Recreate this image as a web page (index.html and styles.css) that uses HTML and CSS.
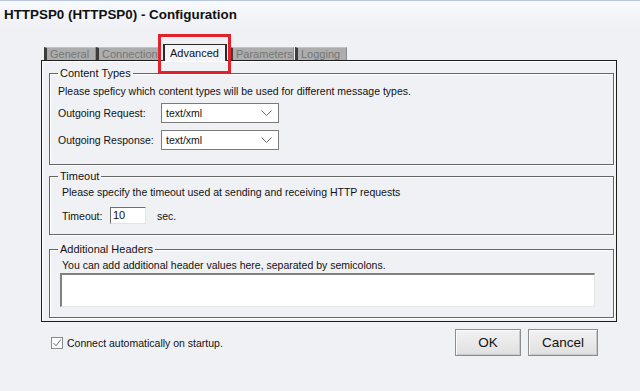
FILE: index.html
```html
<!DOCTYPE html>
<html>
<head>
<meta charset="utf-8">
<link rel="stylesheet" href="styles.css">
</head>
<body>
<div class="window">
  <div class="titlebar">HTTPSP0 (HTTPSP0) - Configuration</div>
  <div class="content">
    <div class="tabs">
      <div class="tab t-general">General</div>
      <div class="tab t-connection">Connection</div>
      <div class="tab active t-advanced">Advanced<span class="highlight"></span></div>
      <div class="tab t-parameters">Parameters</div>
      <div class="tab t-logging">Logging</div>
    </div>
    <div class="panel">
      <fieldset class="group g-content">
        <legend>Content Types</legend>
        <div class="grp-body">
          <div class="desc">Please speficy which content types will be used for different message types.</div>
          <div class="row r-first">
            <span class="lbl">Outgoing Request:</span>
            <div class="select"><span>text/xml</span><svg class="chev" width="11" height="6" viewBox="0 0 11 6"><path d="M0.5 0.5 L5.5 5.5 L10.5 0.5" fill="none" stroke="#6a6a6a" stroke-width="1"/></svg></div>
          </div>
          <div class="row r-second">
            <span class="lbl">Outgoing Response:</span>
            <div class="select"><span>text/xml</span><svg class="chev" width="11" height="6" viewBox="0 0 11 6"><path d="M0.5 0.5 L5.5 5.5 L10.5 0.5" fill="none" stroke="#6a6a6a" stroke-width="1"/></svg></div>
          </div>
        </div>
      </fieldset>
      <fieldset class="group g-timeout">
        <legend>Timeout</legend>
        <div class="grp-body">
          <div class="desc">Please specify the timeout used at sending and receiving HTTP requests</div>
          <div class="row r-timeout">
            <span class="lbl-to">Timeout:</span>
            <div class="input">10</div>
            <span class="unit">sec.</span>
          </div>
        </div>
      </fieldset>
      <fieldset class="group g-headers">
        <legend>Additional Headers</legend>
        <div class="grp-body">
          <div class="desc">You can add additional header values here, separated by semicolons.</div>
          <div class="textarea"></div>
        </div>
      </fieldset>
    </div>
    <div class="footer">
      <label class="check">
        <span class="box"><svg width="10" height="10" viewBox="0 0 10 10"><path d="M1.5 5 L4 7.8 L8.8 1.5" fill="none" stroke="#6d6d6d" stroke-width="1"/></svg></span>
        <span class="check-lbl">Connect automatically on startup.</span>
      </label>
      <div class="buttons">
        <div class="btn b-ok">OK</div>
        <div class="btn b-cancel">Cancel</div>
      </div>
    </div>
  </div>
</div>
</body>
</html>
```

FILE: styles.css
```css
html, body {
  margin: 0;
  padding: 0;
  background: #f0f1f5;
}
body {
  width: 640px;
  height: 391px;
  overflow: hidden;
  font-family: "Liberation Sans", Arial, sans-serif;
  font-size: 10.5px;
  color: #111;
}
.window {
  width: 640px;
  height: 391px;
}
.titlebar {
  height: 27px;
  border-top: 1px solid #b8c7dd;
  background: linear-gradient(#f8f9fc, #eff1f6);
  font-weight: bold;
  font-size: 13.4px;
  line-height: 27px;
  padding-left: 4px;
  color: #111;
}
.content {
  padding-left: 41px;
}
.tabs {
  display: flex;
  align-items: flex-end;
  margin-top: 15px;
  height: 17px;
  padding-left: 3px;
  position: relative;
  z-index: 2;
}
.tab {
  height: 12px;
  line-height: 12px;
  background: #adadad;
  color: #767676;
  border-left: 3px solid #3c3c3c;
  border-top: 1px solid #c4c4c4;
  border-right: 1px solid #8a8a8a;
  box-sizing: content-box;
  padding: 0 2px 0 3px;
  font-size: 11px;
  white-space: nowrap;
  overflow: hidden;
}
.t-general { width: 43px; }
.t-connection { width: 56px; margin-right: 2px; }
.t-advanced { width: 53px; }
.t-parameters { width: 55px; margin-left: 3px; }
.t-logging { width: 43px; margin-left: 1px; }
.tab.active {
  position: relative;
  overflow: visible;
  height: 16px;
  line-height: 16px;
  background: #f4f5f8;
  color: #111;
  border-left: 2px solid #2a2a2a;
  border-top: 1px solid #2a2a2a;
  border-right: 2px solid #2a2a2a;
  margin-bottom: -1px;
  padding: 0 2px 0 5px;
}
.highlight {
  position: absolute;
  left: -7px;
  top: -11px;
  width: 67px;
  height: 34px;
  border: 3px solid #e2222b;
}
.panel {
  width: 574px;
  border: 1px solid #1e1e1e;
  box-shadow: inset 1px 1px 0 #ffffff;
  padding: 6px 0 3px 0;
  display: flex;
  flex-direction: column;
}
.group {
  margin: 0 2px 0 7px;
  padding: 0;
  border: 1px solid #666;
  box-shadow: 1px 1px 0 #fff, inset 1px 1px 0 #fff;
  min-width: 0;
}
.group legend {
  margin-left: 8px;
  padding: 0 2px;
  line-height: 13px;
  height: 13px;
  font-size: 11px;
  color: #111;
}
.g-timeout { margin-top: 5px; }
.g-headers { margin-top: 8px; }
.desc {
  line-height: 13px;
  height: 13px;
  white-space: nowrap;
}
.g-content .grp-body { padding: 5px 0 14px 8px; }
.g-timeout .grp-body { padding: 3px 0 10px 12px; }
.g-headers .grp-body { padding: 3px 0 10px 10px; }
.g-headers .desc { padding-left: 2px; }
.row {
  display: flex;
  align-items: center;
  white-space: nowrap;
}
.r-first { margin-top: 5px; }
.r-second { margin-top: 7px; }
.lbl {
  width: 103px;
  flex: none;
}
.select {
  display: flex;
  align-items: center;
  justify-content: space-between;
  padding: 0 6px 0 4px;
  box-sizing: border-box;
  width: 118px;
  height: 20px;
  border: 1px solid #7a7a7a;
  background: #fff;
}
.r-timeout { margin-top: 8px; }
.lbl-to {
  width: 48px;
  flex: none;
}
.input {
  width: 36px;
  height: 17px;
  box-sizing: border-box;
  background: #fff;
  border-top: 1px solid #6e6e6e;
  border-left: 1px solid #6e6e6e;
  border-right: 1px solid #e4e4e4;
  border-bottom: 1px solid #e4e4e4;
  padding-left: 2px;
  line-height: 15px;
  font-size: 11px;
}
.unit {
  margin-left: 11px;
}
.textarea {
  margin-top: 1px;
  width: 535px;
  height: 34px;
  box-sizing: border-box;
  background: #fff;
  border-top: 2px solid #808080;
  border-left: 2px solid #808080;
  border-right: 1px solid #e6e6e6;
  border-bottom: 1px solid #e6e6e6;
}
.footer {
  width: 576px;
  display: flex;
  justify-content: space-between;
  align-items: flex-start;
}
.check {
  display: flex;
  align-items: center;
  margin-top: 15px;
  margin-left: 10px;
}
.box {
  width: 12px;
  height: 12px;
  box-sizing: border-box;
  border: 1px solid #8a8a8a;
  background: #fff;
  display: flex;
  align-items: center;
  justify-content: center;
}
.check-lbl {
  margin-left: 4px;
}
.buttons {
  display: flex;
  gap: 7px;
  margin-top: 7px;
  margin-right: 19px;
}
.btn {
  height: 27px;
  box-sizing: border-box;
  border: 1px solid #8d8d8d;
  box-shadow: inset 1px 1px 0 #fbfbfb, inset -1px -1px 0 #c9c9c9;
  background: linear-gradient(#f2f2f2, #e0e0e0);
  display: flex;
  align-items: center;
  justify-content: center;
  font-size: 13.5px;
  color: #111;
}
.b-ok { width: 66px; }
.b-cancel { width: 70px; }
```
